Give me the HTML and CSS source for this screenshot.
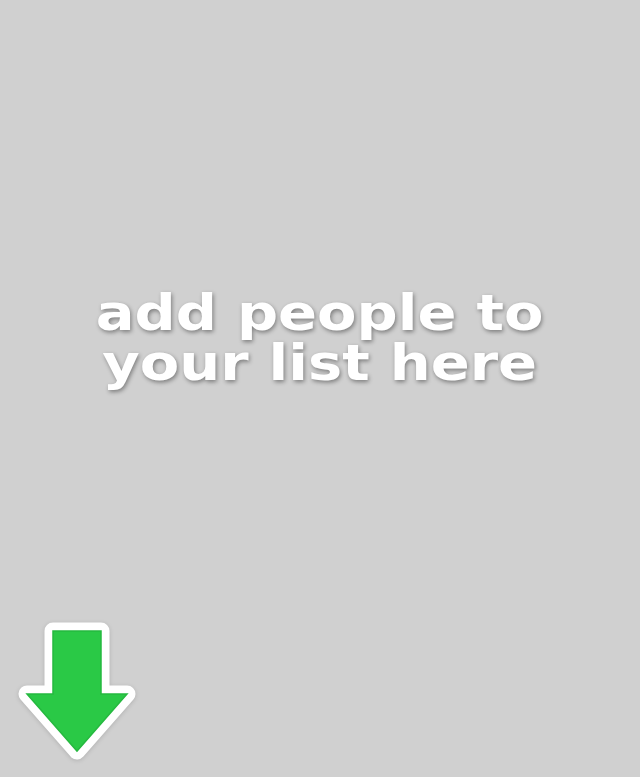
FILE: index.html
```html
<!DOCTYPE html>
<html>
<head>
<meta charset="utf-8">
<link rel="stylesheet" href="styles.css">
</head>
<body>
<div class="page">
  <div class="message">
    <div class="line">add people to</div>
    <div class="line">your list here</div>
  </div>
  <div class="arrow-wrap">
    <svg class="arrow" width="120" height="142" viewBox="0 0 120 142">
      <path d="M36 11 H84 V74 H110 L60 131 L10 74 H36 Z" fill="#ffffff" stroke="#ffffff" stroke-width="17" stroke-linejoin="round"/>
      <path d="M36 11 H84 V74 H110 L60 131 L10 74 H36 Z" fill="#2ac946" stroke="#25b93f" stroke-width="1.5" stroke-linejoin="miter"/>
    </svg>
  </div>
</div>
</body>
</html>
```
FILE: styles.css
```css
html, body {
  margin: 0;
  padding: 0;
  background: #d0d0d0;
}
.page {
  width: 640px;
  height: 777px;
  display: flex;
  flex-direction: column;
  padding-top: 288px;
  padding-bottom: 15px;
  box-sizing: border-box;
  overflow: hidden;
}
.message {
  align-self: center;
  display: flex;
  flex-direction: column;
  align-items: center;
  font-family: "DejaVu Sans", sans-serif;
  font-weight: bold;
  font-size: 50px;
  line-height: 50px;
  color: #ffffff;
  text-shadow: 1px 2px 4px rgba(0, 0, 0, 0.4);
  transform: scaleX(1.15);
}
.line {
  white-space: nowrap;
}
.arrow-wrap {
  margin-top: auto;
  padding-left: 17px;
  display: flex;
}
.arrow {
  display: block;
  filter: drop-shadow(0 1px 2px rgba(0, 0, 0, 0.15));
}
```
